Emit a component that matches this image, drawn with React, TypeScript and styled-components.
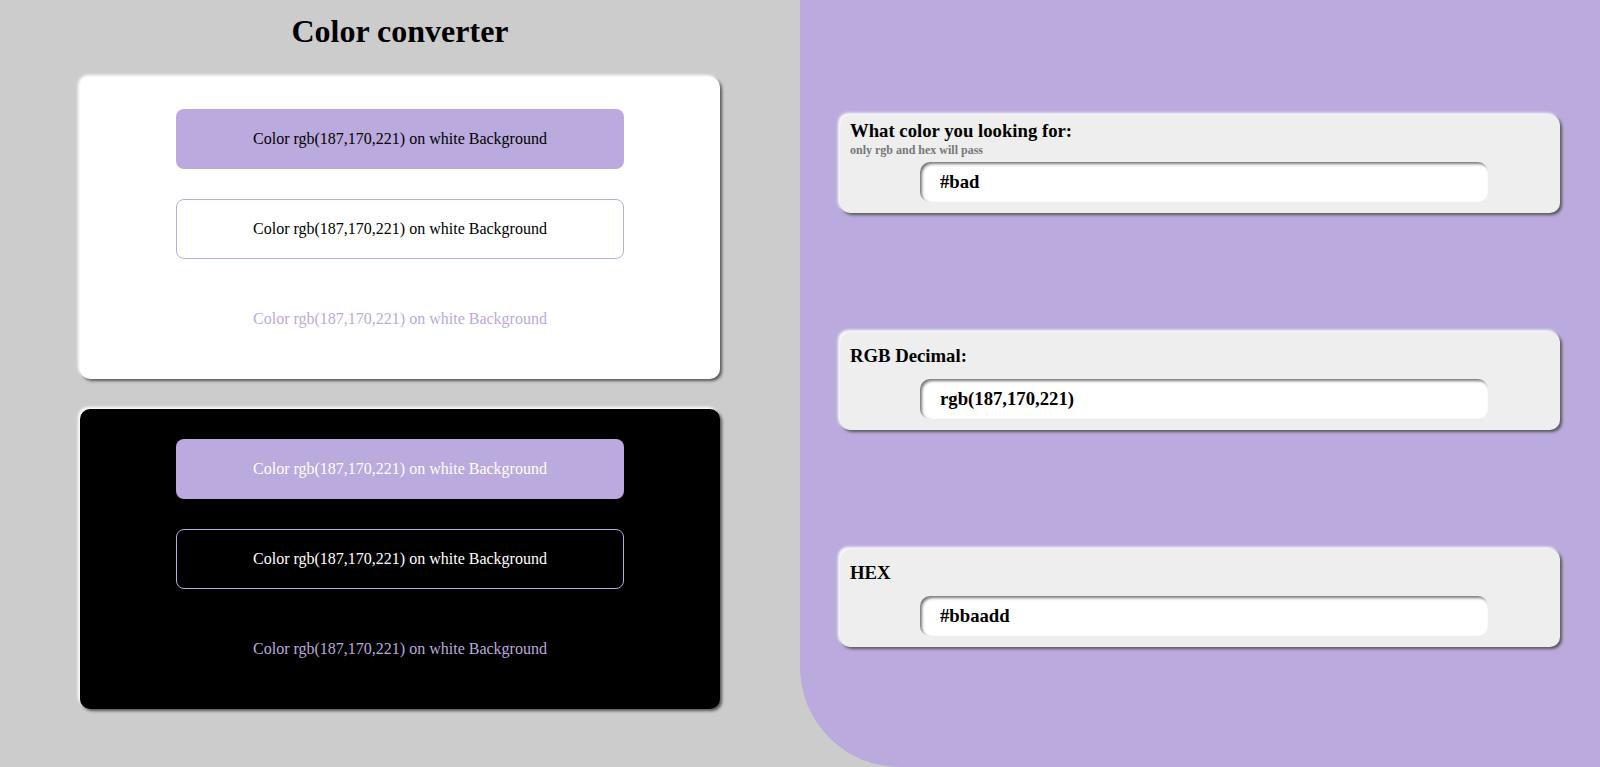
import React from "react";
import styled, { createGlobalStyle, css } from "styled-components";

const GlobalStyle = createGlobalStyle`
  html, body {
    margin: 0;
    padding: 0;
    background: #cccccc;
    font-family: "Liberation Serif", "Times New Roman", serif;
  }
  * { box-sizing: border-box; }
`;

const PURPLE = "#bbaadd";

const Page = styled.div`
  display: grid;
  grid-template-columns: 800px 800px;
  height: 767px;
  overflow: hidden;
`;

const LeftColumn = styled.section`
  display: flex;
  flex-direction: column;
  align-items: center;
`;

const Title = styled.h1`
  margin: 13px 0 27px;
  font-size: 32px;
  font-weight: bold;
  line-height: normal;
  color: #000;
`;

const CardStack = styled.div`
  display: flex;
  flex-direction: column;
  gap: 30px;
  width: 640px;
`;

const Card = styled.div<{ $dark?: boolean }>`
  display: flex;
  flex-direction: column;
  align-items: center;
  gap: 30px;
  padding: ${(p) => (p.$dark ? "30px 0 30px" : "32px 0 30px")};
  border-radius: 10px;
  background: ${(p) => (p.$dark ? "#000" : "#fff")};
  box-shadow: -2px -2px 3px #ffffff, 2px 2px 3px #555555;
`;

type Variant = "filled" | "outline" | "text";

const ColorButton = styled.div<{ $variant: Variant; $dark?: boolean }>`
  width: 448px;
  height: 60px;
  display: flex;
  align-items: center;
  justify-content: center;
  border-radius: 8px;
  font-size: 16px;
  border: 1px solid transparent;
  ${(p) =>
    p.$variant === "filled" &&
    css`
      background: ${PURPLE};
      color: ${p.$dark ? "#fff" : "#000"};
    `}
  ${(p) =>
    p.$variant === "outline" &&
    css`
      background: ${p.$dark ? "#000" : "#fff"};
      border-color: ${PURPLE};
      color: ${p.$dark ? "#fff" : "#000"};
    `}
  ${(p) =>
    p.$variant === "text" &&
    css`
      background: transparent;
      color: ${PURPLE};
    `}
`;

const RightPanel = styled.section`
  background: ${PURPLE};
  border-bottom-left-radius: 100px;
  display: flex;
  flex-direction: column;
  align-items: center;
  gap: 119px;
  padding-top: 115px;
`;

const Field = styled.div`
  width: 720px;
  height: 98px;
  display: grid;
  grid-template-rows: 1fr auto;
  padding: 0 10px 11px;
  border-radius: 10px;
  background: #eeeeee;
  box-shadow: -2px -2px 3px #ffffff, 2px 2px 3px #555555;
`;

const FieldHeader = styled.div`
  display: flex;
  flex-direction: column;
  justify-content: center;
`;

const FieldLabel = styled.h3`
  margin: 0;
  font-size: 18.72px;
  font-weight: bold;
  line-height: normal;
  color: #000;
`;

const FieldHint = styled.span`
  font-size: 12px;
  font-weight: bold;
  color: #777777;
  line-height: normal;
  margin-top: 1px;
`;

const FieldInput = styled.input`
  display: block;
  margin-left: 10%;
  width: calc(80% + 8px);
  height: 40px;
  padding: 0 0 0 20px;
  border: none;
  outline: none;
  border-radius: 10px;
  background: #fff;
  box-shadow: inset 2px 2px 3px #777777;
  font-family: "Liberation Serif", "Times New Roman", serif;
  font-size: 18.72px;
  font-weight: bold;
  color: #000;
`;

const SAMPLE = "Color rgb(187,170,221) on white Background";

function SampleCard({ dark }: { dark?: boolean }) {
  return (
    <Card $dark={dark}>
      <ColorButton $variant="filled" $dark={dark}>{SAMPLE}</ColorButton>
      <ColorButton $variant="outline" $dark={dark}>{SAMPLE}</ColorButton>
      <ColorButton $variant="text" $dark={dark}>{SAMPLE}</ColorButton>
    </Card>
  );
}

export default function App() {
  return (
    <>
      <GlobalStyle />
      <Page>
        <LeftColumn>
          <Title>Color converter</Title>
          <CardStack>
            <SampleCard />
            <SampleCard dark />
          </CardStack>
        </LeftColumn>
        <RightPanel>
          <Field>
            <FieldHeader>
              <FieldLabel>What color you looking for:</FieldLabel>
              <FieldHint>only rgb and hex will pass</FieldHint>
            </FieldHeader>
            <FieldInput readOnly value="#bad" />
          </Field>
          <Field>
            <FieldHeader>
              <FieldLabel>RGB Decimal:</FieldLabel>
            </FieldHeader>
            <FieldInput readOnly value="rgb(187,170,221)" />
          </Field>
          <Field>
            <FieldHeader>
              <FieldLabel>HEX</FieldLabel>
            </FieldHeader>
            <FieldInput readOnly value="#bbaadd" />
          </Field>
        </RightPanel>
      </Page>
    </>
  );
}
